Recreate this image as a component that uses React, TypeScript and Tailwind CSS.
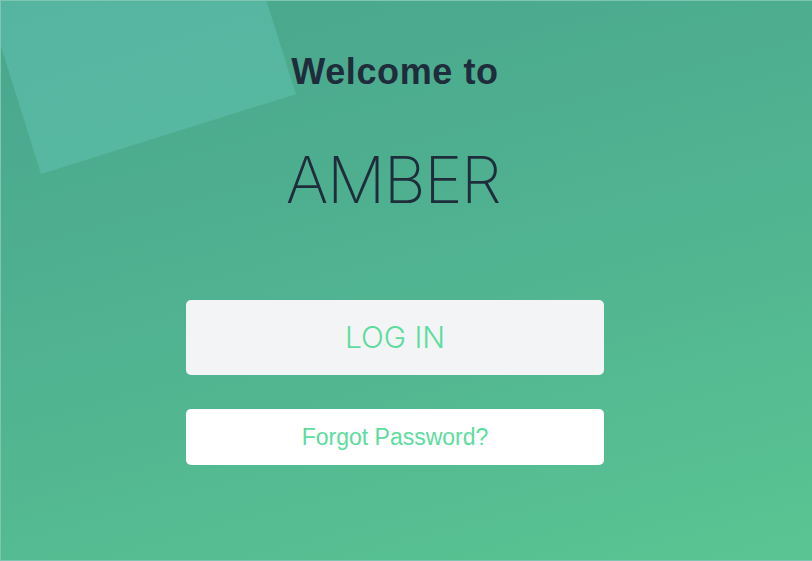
export default function App() {
  return (
    <div className="relative h-[561px] w-[812px] overflow-hidden border-t border-l border-b border-[#7fc6b2] bg-[linear-gradient(165deg,#49a68c_0%,#50b391_50%,#5ac592_100%)] font-['Helvetica_Neue','Liberation_Sans',Arial,sans-serif]">
      {/* decorative tilted panel */}
      <div className="absolute left-[-60px] top-[-230px] h-[330px] w-[267px] origin-bottom-left translate-x-[100px] translate-y-[73px] -rotate-[17.4deg] bg-[linear-gradient(180deg,#53b29f,#57b8a2)]" />

      <div className="relative ml-[185px] flex w-[418px] flex-col items-center">
        <h1 className="mt-[51px] text-[36px] font-bold leading-[40px] tracking-[0.6px] text-[#1f2c3b]">
          Welcome to
        </h1>
        <div className="mt-[52px] pr-[4px] font-['Inter',sans-serif] text-[65px] font-extralight leading-[72px] tracking-[-1.5px] text-[#1f2c3b]">
          AMBER
        </div>

        <button className="mt-[84px] flex h-[75px] w-full items-center justify-center rounded-[5px] bg-[#f3f4f6] font-['Inter',sans-serif] text-[30px] font-light text-[#5ddc9e]">
          LOG IN
        </button>
        <button className="mt-[34px] flex h-[56px] w-full items-center justify-center rounded-[5px] bg-white text-[23px] text-[#5ddc9e]">
          Forgot Password?
        </button>
      </div>
    </div>
  );
}
